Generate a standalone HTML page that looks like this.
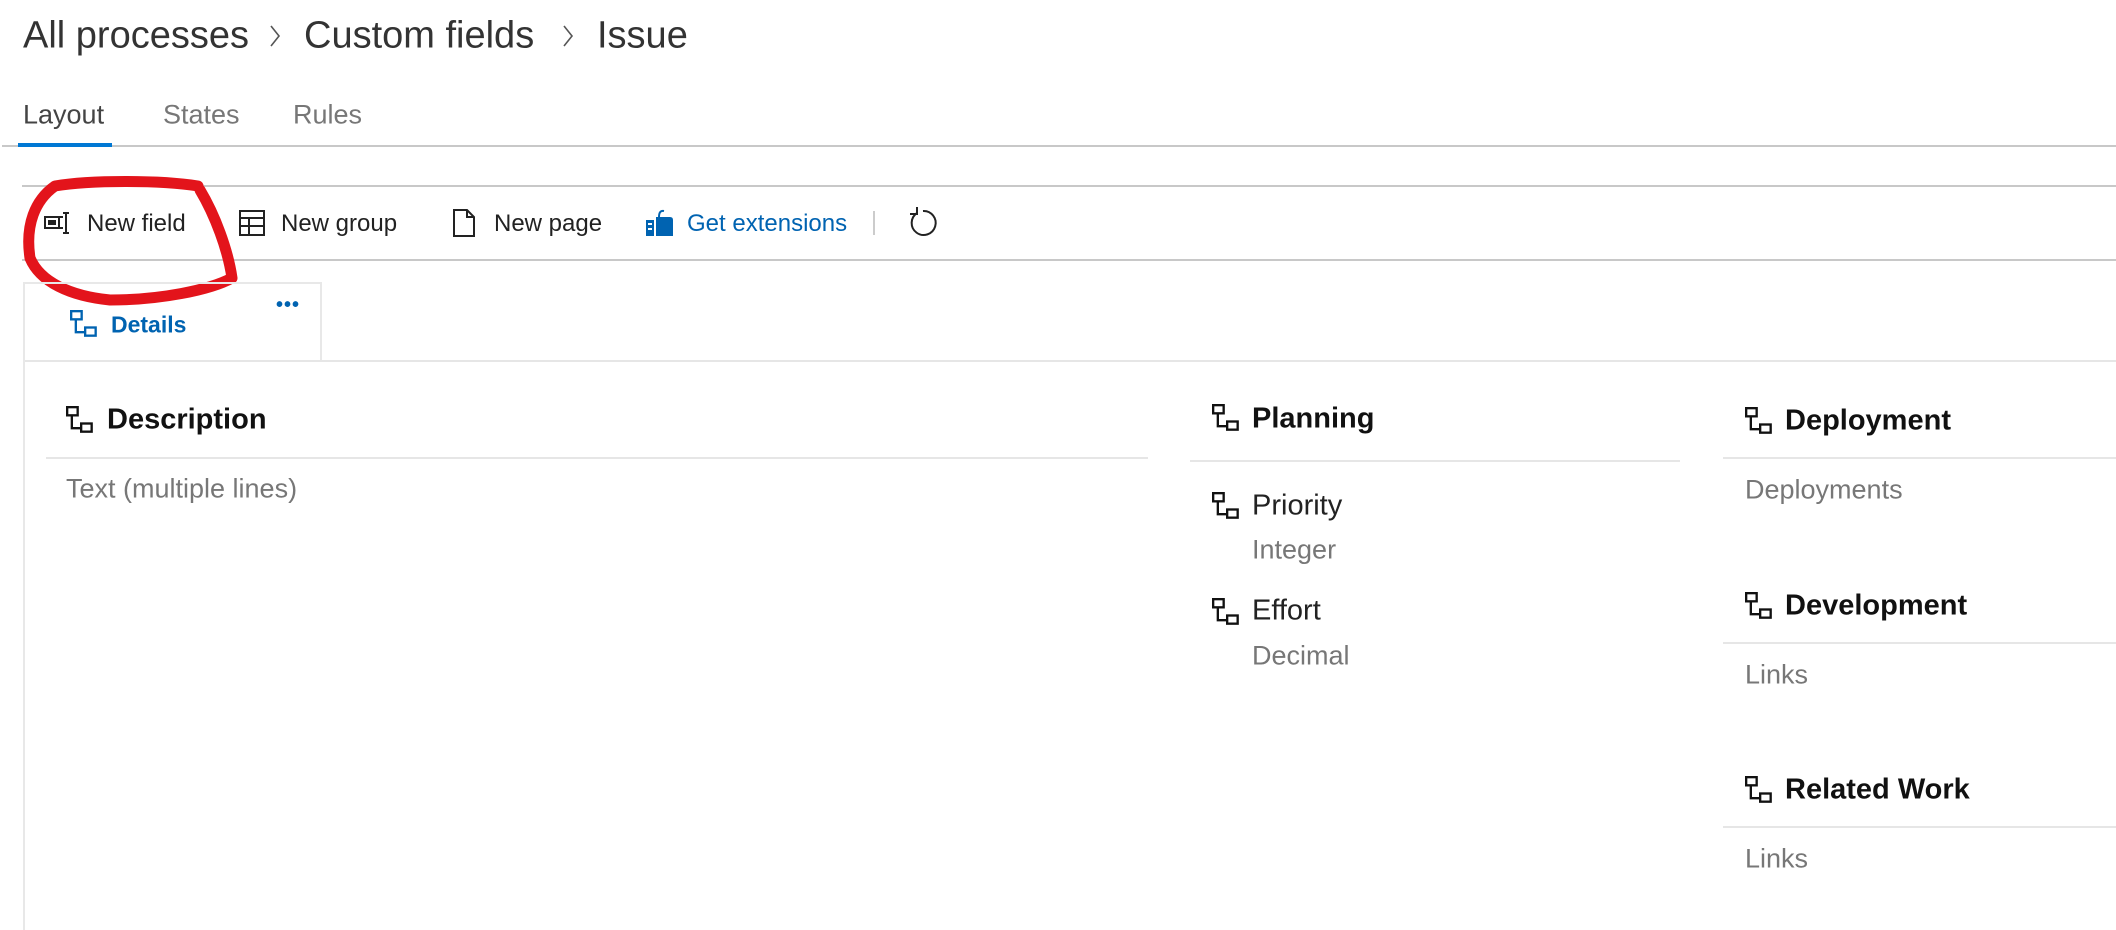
<!DOCTYPE html>
<html><head><meta charset="utf-8"><style>
*{margin:0;padding:0;box-sizing:border-box}
body{width:2116px;height:930px;background:#fff;position:relative;overflow:hidden;font-family:"Liberation Sans",sans-serif;color:#222}
.a{position:absolute;white-space:nowrap}
.t{font-size:38px;color:#333;transform:translateY(-50%)}
.tab{font-size:27px;color:#777;transform:translateY(-50%)}
.tb{font-size:24px;color:#222;transform:translateY(-50%)}
.hd{font-size:29px;font-weight:bold;color:#111;transform:translateY(-50%)}
.fn{font-size:29px;color:#222;transform:translateY(-50%)}
.gr{font-size:27px;color:#777;transform:translateY(-50%)}
.ln{position:absolute;height:2px;background:#e6e6e6}
.ic{position:absolute;transform:translateY(-50%)}
</style></head><body>
<div class="a t" style="left:23px;top:36px">All processes</div>
<svg class="a" style="left:268px;top:24px" width="14" height="24"><path d="M3 2 L11 12 L3 22" fill="none" stroke="#555" stroke-width="1.6"/></svg>
<div class="a t" style="left:304px;top:36px">Custom fields</div>
<svg class="a" style="left:561px;top:24px" width="14" height="24"><path d="M3 2 L11 12 L3 22" fill="none" stroke="#555" stroke-width="1.6"/></svg>
<div class="a t" style="left:597px;top:36px">Issue</div>

<div class="a tab" style="left:23px;top:115px;color:#444">Layout</div>
<div class="a tab" style="left:163px;top:115px">States</div>
<div class="a tab" style="left:293px;top:115px">Rules</div>
<div class="ln" style="left:2px;right:0;top:145px;background:#c8c8c8"></div>
<div class="a" style="left:18px;top:143px;width:94px;height:4px;background:#0078d4"></div>

<div class="ln" style="left:22px;right:0;top:185px;background:#c8c8c8"></div>
<div class="ln" style="left:22px;right:0;top:259px;background:#c8c8c8"></div>

<svg class="ic" style="left:43px;top:223px" width="30" height="26" viewBox="0 0 30 26"><rect x="2" y="7" width="14" height="11" fill="none" stroke="#222" stroke-width="2"/><rect x="5" y="10" width="8" height="5" fill="#222"/><path d="M20 3 H26 M23 3 V23 M20 23 H26 M16 7 H20 M16 18 H20" stroke="#222" stroke-width="2" fill="none"/></svg>
<div class="a tb" style="left:87px;top:224px">New field</div>
<svg class="ic" style="left:238px;top:223px" width="28" height="28" viewBox="0 0 28 28"><rect x="2" y="2" width="24" height="24" fill="none" stroke="#222" stroke-width="2"/><path d="M2 9 H26 M2 17 H26 M11 9 V26" stroke="#222" stroke-width="2"/></svg>
<div class="a tb" style="left:281px;top:224px">New group</div>
<svg class="ic" style="left:452px;top:223px" width="24" height="30" viewBox="0 0 24 30"><path d="M2 2 H15 L22 9 V28 H2 Z M15 2 V9 H22" fill="none" stroke="#222" stroke-width="2"/></svg>
<div class="a tb" style="left:494px;top:224px">New page</div>
<svg class="ic" style="left:645px;top:223px" width="30" height="30" viewBox="0 0 30 30"><rect x="1" y="12" width="8" height="16" fill="#0063b1"/><rect x="3" y="15" width="4" height="2" fill="#fff"/><rect x="3" y="20" width="4" height="2" fill="#fff"/><path d="M11 9 H25 Q28 9 28 12 V28 H11 Z" fill="#0063b1"/><path d="M14 9 Q14 2 19 3" fill="none" stroke="#0063b1" stroke-width="2"/></svg>
<div class="a tb" style="left:687px;top:224px;color:#0063b1">Get extensions</div>
<div class="a" style="left:873px;top:211px;width:2px;height:24px;background:#ccc"></div>
<svg class="ic" style="left:907px;top:223px" width="32" height="34" viewBox="0 0 32 34"><path d="M10 7 A12 12 0 1 0 16 5" fill="none" stroke="#222" stroke-width="2"/><path d="M10 1 V8 H3" fill="none" stroke="#222" stroke-width="2"/></svg>

<!-- red circle -->
<svg class="a" style="left:0;top:0" width="260" height="320"><path d="M198 186 C160 180 90 180 55 186 C35 200 25 225 30 258 C40 282 70 296 110 300 C160 300 210 290 232 278 C228 250 215 215 200 190" fill="none" stroke="#e3141b" stroke-width="11" stroke-linecap="round" stroke-linejoin="round"/></svg>

<!-- details tab -->
<div class="a" style="left:23px;top:282px;width:299px;height:80px;border:2px solid #e8e8e8;border-bottom:none"></div>
<div class="ln" style="left:23px;right:0;top:360px"></div>
<div class="a" style="left:23px;top:360px;width:2px;height:570px;background:#e8e8e8"></div>
<svg class="ic" style="left:70px;top:324px" width="28" height="28" viewBox="0 0 24 24"><rect x="1" y="1" width="9" height="7" fill="none" stroke="#0063b1" stroke-width="2"/><rect x="13" y="15" width="9" height="7" fill="none" stroke="#0063b1" stroke-width="2"/><path d="M5 8 V19 H13" fill="none" stroke="#0063b1" stroke-width="2"/></svg>
<div class="a" style="left:111px;top:325px;transform:translateY(-50%);font-size:23px;font-weight:bold;color:#0063b1">Details</div>
<div class="a" style="left:276px;top:294px;font-size:20px;color:#0063b1;letter-spacing:1px;font-weight:bold">•••</div>

<!-- Description -->
<svg class="ic" style="left:66px;top:420px" width="28" height="28" viewBox="0 0 24 24"><rect x="1" y="1" width="9" height="7" fill="none" stroke="#111" stroke-width="2"/><rect x="13" y="15" width="9" height="7" fill="none" stroke="#111" stroke-width="2"/><path d="M5 8 V19 H13" fill="none" stroke="#111" stroke-width="2"/></svg>
<div class="a hd" style="left:107px;top:420px">Description</div>
<div class="ln" style="left:46px;width:1102px;top:457px"></div>
<div class="a gr" style="left:66px;top:489px">Text (multiple lines)</div>

<!-- Planning -->
<svg class="ic" style="left:1212px;top:418px" width="28" height="28" viewBox="0 0 24 24"><rect x="1" y="1" width="9" height="7" fill="none" stroke="#111" stroke-width="2"/><rect x="13" y="15" width="9" height="7" fill="none" stroke="#111" stroke-width="2"/><path d="M5 8 V19 H13" fill="none" stroke="#111" stroke-width="2"/></svg>
<div class="a hd" style="left:1252px;top:419px">Planning</div>
<div class="ln" style="left:1190px;width:490px;top:460px"></div>
<svg class="ic" style="left:1212px;top:506px" width="28" height="28" viewBox="0 0 24 24"><rect x="1" y="1" width="9" height="7" fill="none" stroke="#111" stroke-width="2"/><rect x="13" y="15" width="9" height="7" fill="none" stroke="#111" stroke-width="2"/><path d="M5 8 V19 H13" fill="none" stroke="#111" stroke-width="2"/></svg>
<div class="a fn" style="left:1252px;top:506px">Priority</div>
<div class="a gr" style="left:1252px;top:550px">Integer</div>
<svg class="ic" style="left:1212px;top:612px" width="28" height="28" viewBox="0 0 24 24"><rect x="1" y="1" width="9" height="7" fill="none" stroke="#111" stroke-width="2"/><rect x="13" y="15" width="9" height="7" fill="none" stroke="#111" stroke-width="2"/><path d="M5 8 V19 H13" fill="none" stroke="#111" stroke-width="2"/></svg>
<div class="a fn" style="left:1252px;top:611px">Effort</div>
<div class="a gr" style="left:1252px;top:656px">Decimal</div>

<!-- right column -->
<svg class="ic" style="left:1745px;top:421px" width="28" height="28" viewBox="0 0 24 24"><rect x="1" y="1" width="9" height="7" fill="none" stroke="#111" stroke-width="2"/><rect x="13" y="15" width="9" height="7" fill="none" stroke="#111" stroke-width="2"/><path d="M5 8 V19 H13" fill="none" stroke="#111" stroke-width="2"/></svg>
<div class="a hd" style="left:1785px;top:421px">Deployment</div>
<div class="ln" style="left:1723px;right:0;top:457px"></div>
<div class="a gr" style="left:1745px;top:490px">Deployments</div>

<svg class="ic" style="left:1745px;top:606px" width="28" height="28" viewBox="0 0 24 24"><rect x="1" y="1" width="9" height="7" fill="none" stroke="#111" stroke-width="2"/><rect x="13" y="15" width="9" height="7" fill="none" stroke="#111" stroke-width="2"/><path d="M5 8 V19 H13" fill="none" stroke="#111" stroke-width="2"/></svg>
<div class="a hd" style="left:1785px;top:606px">Development</div>
<div class="ln" style="left:1723px;right:0;top:642px"></div>
<div class="a gr" style="left:1745px;top:675px">Links</div>

<svg class="ic" style="left:1745px;top:790px" width="28" height="28" viewBox="0 0 24 24"><rect x="1" y="1" width="9" height="7" fill="none" stroke="#111" stroke-width="2"/><rect x="13" y="15" width="9" height="7" fill="none" stroke="#111" stroke-width="2"/><path d="M5 8 V19 H13" fill="none" stroke="#111" stroke-width="2"/></svg>
<div class="a hd" style="left:1785px;top:790px">Related Work</div>
<div class="ln" style="left:1723px;right:0;top:826px"></div>
<div class="a gr" style="left:1745px;top:859px">Links</div>
</body></html>
